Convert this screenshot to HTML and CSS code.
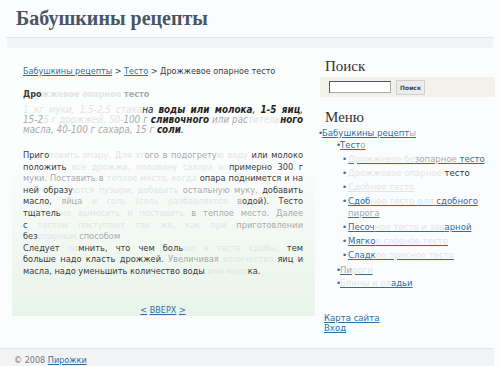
FILE: index.html
```html
<!DOCTYPE html>
<html lang="ru">
<head>
    <meta charset="UTF-8">
    <title>Дрожжевое опарное тесто</title>
    <link rel="stylesheet" href="styles.css">
</head>
<body>

    <div class="header">
        <h1>Бабушкины рецепты</h1>
    </div>
    <div class="header-band"></div>

    <div class="page">
        <div class="content">
            <p class="crumbs"><a href="#">Бабушкины рецепты</a> &gt; <a href="#">Тесто</a> &gt; Дрожжевое опарное тесто</p>

            <p class="title">Дро<span class="f1">жжевое опарное</span> <span class="f2">тесто</span></p>
            <p class="ingredients">
                <span class="ln"><span class="f1">1 кг муки, 1,5-2,5 стака</span>на <b>воды или молока</b>, <b>1-5 яиц</b>,</span>
                <span class="ln"><span class="f2">15-2</span><span class="f1">5 г дрожжей, 50-</span><span class="f2">100 г</span> <b>сливочного</b> <span class="f2">или рас</span><span class="f1">титель</span><b>ного</b></span>
                <span class="ln end"><span class="f2">масла, 40-100 г сахара, 15 г</span> <b>соли</b>.</span>
            </p>

            <p class="text">
                <span class="ln">Приго<span class="f1">товить опару. Для эт</span><span class="f2">ого в подогрету</span><span class="f1">ю воду</span> или молоко</span>
                <span class="ln">положить <span class="f1">все дрожжи, половину сахара и</span> примерно 300 г</span>
                <span class="ln"><span class="f2">муки. Поставить в</span> <span class="f1">теплое место, когда</span> опара поднимется и на</span>
                <span class="ln">ней образу<span class="f1">ются пузыри, добавить</span> <span class="f2">остальную муку,</span> добавить</span>
                <span class="ln">масло, <span class="f2">яйца</span> <span class="f1">и соль (соль разбавляется</span> <span class="f2">в</span>одой). Тесто</span>
                <span class="ln">тщатель<span class="f1">но вымесить и поставить</span> <span class="f2">в теплое место. Далее</span></span>
                <span class="ln">с <span class="f1">тестом поступают так же, как при</span> <span class="f2">приготовлении</span></span>
                <span class="ln end">без<span class="f1">опарным</span> <span class="f2">способом</span></span>
                <span class="ln">Следует <span class="f1">по</span>мнить, что чем боль<span class="f1">ше в тесте сдобы,</span> тем</span>
                <span class="ln">больше надо класть дрожжей. <span class="f2">Увеличивая</span> <span class="f1">количество</span> яиц и</span>
                <span class="ln end">масла, надо уменьшить количество воды <span class="f1">или моло</span>ка.</span>
            </p>

            <p class="up"><a href="#">&lt;</a> <a href="#">ВВЕРХ</a> <a href="#">&gt;</a></p>
        </div>

        <div class="sidebar">
            <h3>Поиск</h3>
            <form class="search">
                <input type="text" class="search-input">
                <button type="button" class="search-btn">Поиск</button>
            </form>

            <h3 class="menu-title">Меню</h3>
            <ul class="menu">
                <li><a href="#">Бабушкины рецепт<span class="f2">ы</span></a>
                    <ul>
                        <li><a href="#">Тест<span class="f2">о</span></a>
                            <ul class="sub">
                                <li><a href="#"><span class="f1">Дрожжевое бе</span><span class="f2">зопарное</span> тесто</a></li>
                                <li class="current"><span class="f1">Дрожжевое опарное</span> тесто</li>
                                <li><a href="#" class="f1">Сдобное тесто</a></li>
                                <li><a href="#">Сдоб<span class="f1">ное тесто для</span> сдобного <span class="f2">пирога</span></a></li>
                                <li><a href="#">Песоч<span class="f1">ное тесто и зав</span>арной</a></li>
                                <li><a href="#">Мягко<span class="f1">е слоеное тесто</span></a></li>
                                <li><a href="#">Сладк<span class="f1">ое пресное тесто</span></a></li>
                            </ul>
                        </li>
                        <li><a href="#"><span class="f2">Пи</span><span class="f1">роги</span></a></li>
                        <li><a href="#"><span class="f1">Блины и ол</span>адьи</a></li>
                    </ul>
                </li>
            </ul>

            <div class="side-links">
                <a href="#">Карта сайта</a><br>
                <a href="#">Вход</a>
            </div>
        </div>
    </div>

    <div class="footer">
        &copy; 2008 <a href="#">Пирожки</a>
    </div>

</body>
</html>
```

FILE: styles.css
```css
body { margin: 0; background: #fbfcfd; font-family: "DejaVu Sans Condensed", "DejaVu Sans", sans-serif; font-stretch: condensed; font-size: 9px; color: #3a3a3a; }
a { color: #2f6f9f; }
.f1 { color: #e2e4e4; }
.f2 { color: #a8aaac; }

.header { height: 37px; border-bottom: 1px solid #e2e6ea; margin: 0 6px; }
.header h1 { margin: 0; padding: 7px 0 0 10px; font-family: "Liberation Serif", serif; font-size: 20px; color: #4a5561; }
.header-band { height: 10px; margin: 0 7px; background: #f2f4f6; }

.page { display: grid; grid-template-columns: 303px 1fr; gap: 5px; padding: 2px 5px 0 12px; align-items: start; }

.content { box-sizing: border-box; height: 266px; padding: 16px 12px 1px 11px; display: flex; flex-direction: column; background: linear-gradient(#fcfdfd 40%, #e8f4e9); }
.crumbs { margin: 0 0 13px; }
.title { margin: 0 0 5px; font-weight: bold; line-height: 11px; }
.ingredients { margin: 0 0 14px; font-style: italic; font-size: 9.8px; line-height: 10px; color: #222; }
.text { margin: 0; font-size: 9.2px; line-height: 11.6px; }
.ln { display: block; text-align: justify; text-align-last: justify; }
.ln.end { text-align-last: left; }
.up { margin: auto 0 0; line-height: 10px; text-align: center; }

.sidebar { padding-top: 8px; font-size: 9.5px; }
.sidebar h3 { margin: 0 0 2px 5px; font-family: "Liberation Serif", serif; font-size: 15px; font-weight: normal; color: #333; line-height: 17px; }
.search { background: #f2f1ea; display: flex; align-items: center; gap: 5px; padding: 4px 8px 4px 9px; height: 12px; }
.search-input { box-sizing: border-box; width: 62px; height: 12px; border: 1px solid #aaa; border-top-color: #555; border-left-color: #555; padding: 0; background: #fff; }
.search-btn { font: bold 6px "DejaVu Sans", sans-serif; padding: 3px 3px; background: #ececec; border: 1px solid #d0d0d0; color: #444; }
.menu-title { margin-top: 12px !important; }

.menu, .menu ul { list-style: none; margin: 0; padding: 0; }
.menu { margin: -1px 0 0 -2px; }
.menu li { padding-left: 4px; position: relative; line-height: 12px; margin-bottom: 1px; }
.menu li::before { content: "\2022"; position: absolute; left: 0; color: #2f6f9f; }
.menu ul { padding-left: 14px; }
.menu .sub { padding-left: 2px; margin: 2px 0 3px; }
.menu .sub li { padding-left: 6px; margin-bottom: 2px; }
.menu .current { color: #333; }

.side-links { margin: 24px 0 0 4px; line-height: 10px; }

.footer { margin: 15px 6px 0 0; border-top: 1px solid #e2e4e6; background: #f2f3f4; height: 25px; padding-left: 14px; line-height: 23px; color: #777; }
```
